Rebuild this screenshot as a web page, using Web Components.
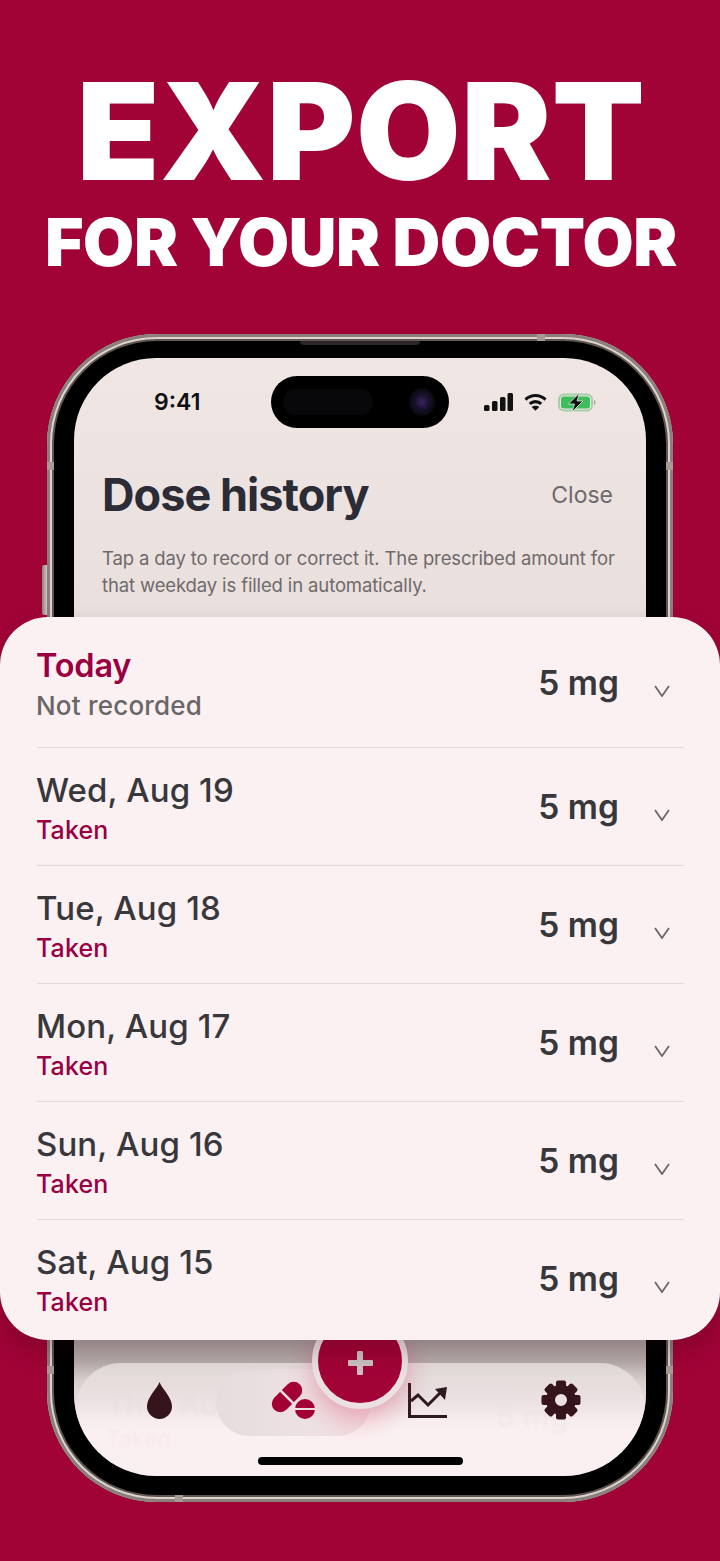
<!DOCTYPE html>
<html>
<head>
<meta charset="utf-8">
<style>
  html, body { margin: 0; padding: 0; background: #a10337; }
  body { font-family: Inter, "Liberation Sans", sans-serif; }
</style>
</head>
<body>
<promo-page>
  <span slot="big">EXPORT</span>
  <span slot="small">FOR YOUR DOCTOR</span>
  <phone-frame>
    <status-bar></status-bar>
    <sheet-header></sheet-header>
    <ghost-list></ghost-list>
    <tab-bar slot="over"></tab-bar>
  </phone-frame>
  <dose-sheet slot="sheet">
    <dose-row first date="Today" status="Not recorded" today></dose-row>
    <dose-row date="Wed, Aug 19" status="Taken"></dose-row>
    <dose-row date="Tue, Aug 18" status="Taken"></dose-row>
    <dose-row date="Mon, Aug 17" status="Taken"></dose-row>
    <dose-row date="Sun, Aug 16" status="Taken"></dose-row>
    <dose-row last date="Sat, Aug 15" status="Taken"></dose-row>
  </dose-sheet>
</promo-page>

<script>
class PromoPage extends HTMLElement {
  connectedCallback() {
    this.attachShadow({ mode: 'open' });
    this.shadowRoot.innerHTML = `
      <style>
        :host {
          display: block;
          position: relative;
          width: 720px;
          height: 1561px;
          overflow: hidden;
          background: #a10337;
          color: #fff;
          font-family: Inter, "Liberation Sans", sans-serif;
        }
        .head { display: flex; flex-direction: column; align-items: center; padding: 62px 0 0 2px; }
        .big { font-size: 135px; font-weight: 900; line-height: 138px; letter-spacing: 0.6px; }
        .small { font-size: 66px; font-weight: 900; line-height: 70px; margin-top: 7px; letter-spacing: -0.35px; }
        .phone { display: flex; justify-content: center; margin-top: 57px; }
        ::slotted(dose-sheet) { position: absolute; left: 0; top: 617px; }
      </style>
      <div class="head">
        <div class="big"><slot name="big"></slot></div>
        <div class="small"><slot name="small"></slot></div>
      </div>
      <div class="phone"><slot></slot></div>
      <slot name="sheet"></slot>
    `;
  }
}

class PhoneFrame extends HTMLElement {
  connectedCallback() {
    this.attachShadow({ mode: 'open' });
    this.shadowRoot.innerHTML = `
      <style>
        :host {
          display: block;
          position: relative;
          box-sizing: border-box;
          width: 626px;
          height: 1168px;
          padding: 24px 27px 26px;
          border-radius: 110px;
          background: #000;
          box-shadow: inset 0 0 0 3px #8b7f7b, inset 0 0 0 5px #dcd3cc, inset 0 0 0 7px #5f5552;
        }
        .screen {
          position: relative;
          display: flex;
          flex-direction: column;
          height: 100%;
          border-radius: 82px;
          overflow: hidden;
          background: linear-gradient(#f0e7e5 0, #e9dfdd 260px, #e6dcda 280px, #fbf0f1 1000px);
        }
        .island {
          position: absolute; left: 197px; top: 18px; width: 178px; height: 52px;
          border-radius: 26px; background: #000;
        }
        .island i { position: absolute; left: 12px; top: 13px; width: 90px; height: 26px; border-radius: 13px; background: #08080a; }
        .island b { position: absolute; left: 138px; top: 12px; width: 26px; height: 28px; border-radius: 50%; background: radial-gradient(#3a2460 0, #1a1230 35%, #09090d 70%); }
        .speaker { position: absolute; left: 253px; top: 7px; width: 120px; height: 4px; background: #2b2527; border-radius: 0 0 4px 4px; }
        .btn { position: absolute; left: -5px; top: 231px; width: 5px; height: 50px; background: linear-gradient(90deg, #8d827e, #cfc6bf); border-radius: 2px 0 0 2px; }
        .band { position: absolute; background: #a59a94; }
      </style>
      <span class="band" style="left:0;top:128px;width:7px;height:8px"></span>
      <span class="band" style="right:0;top:128px;width:7px;height:8px"></span>
      <span class="band" style="left:0;bottom:128px;width:7px;height:8px"></span>
      <span class="band" style="right:0;bottom:128px;width:7px;height:8px"></span>
      <span class="band" style="left:490px;top:0;width:8px;height:7px"></span>
      <span class="band" style="left:128px;bottom:0;width:8px;height:7px"></span>
      <span class="btn"></span>
      <span class="speaker"></span>
      <div class="screen">
        <slot></slot>
        <div class="island"><i></i><b></b></div>
        <slot name="over"></slot>
      </div>
    `;
  }
}

class StatusBar extends HTMLElement {
  connectedCallback() {
    this.attachShadow({ mode: 'open' });
    this.shadowRoot.innerHTML = `
      <style>
        :host {
          display: flex;
          align-items: center;
          justify-content: space-between;
          height: 88px;
          padding: 0 49px 0 80px;
          color: #101014;
          font: 600 23px Inter, "Liberation Sans", sans-serif;
        }
        .icons { display: flex; align-items: center; gap: 11px; }
        svg { display: block; }
      </style>
      <span>9:41</span>
      <span class="icons">
        <svg width="29" height="18" viewBox="0 0 29 18">
          <rect x="0" y="12" width="5.500" height="6" rx="1.500" fill="#111"/>
          <rect x="8" y="8" width="5.500" height="10" rx="1.500" fill="#111"/>
          <rect x="16" y="4" width="5.500" height="14" rx="1.500" fill="#111"/>
          <rect x="23.500" y="0" width="5.500" height="18" rx="1.500" fill="#111"/>
        </svg>
        <svg width="23" height="18" viewBox="0 0 24 18" fill="none" stroke="#111" stroke-width="3.200">
          <path d="M1.500 6.500C7.500 .8 16.500 .8 22.500 6.500"/>
          <path d="M6 11C9.500 7.800 14.500 7.800 18 11"/>
          <path d="M12 18L8 14.200C10.200 12.400 13.800 12.400 16 14.200Z" fill="#111" stroke="none"/>
        </svg>
        <svg width="39" height="19" viewBox="0 0 39 19">
          <rect x="1" y="1.500" width="33" height="16" rx="5" fill="none" stroke="#a3cfa8" stroke-width="2"/>
          <rect x="3" y="3.500" width="29" height="12" rx="3" fill="#3fbc5c"/>
          <path d="M36 7c2 .5 2 4.500 0 5z" fill="#a8a09e"/>
          <path d="M21.500 0L10.500 11h6L14 19l11-11h-6z" fill="#111" stroke="#dff0df" stroke-width=".8"/>
        </svg>
      </span>
    `;
  }
}

class SheetHeader extends HTMLElement {
  connectedCallback() {
    this.attachShadow({ mode: 'open' });
    this.shadowRoot.innerHTML = `
      <style>
        :host { display: block; padding: 18px 33px 0 28px; font-family: Inter, "Liberation Sans", sans-serif; }
        .top { display: flex; align-items: center; justify-content: space-between; }
        h1 { margin: 0; font-size: 45px; line-height: 62px; font-weight: 700; color: #2b2c36; letter-spacing: -0.95px; }
        span { font-size: 23px; color: #6e6a6b; }
        p { margin: 19px -14px 0 0; font-size: 18.500px; line-height: 27px; color: #6f6a6b; letter-spacing: -0.13px; }
      </style>
      <div class="top"><h1>Dose history</h1><span>Close</span></div>
      <p>Tap a day to record or correct it. The prescribed amount for that weekday is filled in automatically.</p>
    `;
  }
}

class GhostList extends HTMLElement {
  connectedCallback() {
    this.attachShadow({ mode: 'open' });
    this.shadowRoot.innerHTML = `
      <style>
        :host {
          display: flex;
          justify-content: space-between;
          margin-top: auto;
          padding: 0 78px 22px 32px;
          font-family: Inter, "Liberation Sans", sans-serif;
          filter: blur(1.5px);
        }
        .d { font-size: 30px; font-weight: 500; color: rgba(60,50,55,.08); line-height: 40px; }
        .t { font-size: 23px; color: rgba(163,0,53,.06); line-height: 30px; }
        .m { font-size: 30px; font-weight: 500; color: rgba(60,50,55,.05); margin-top: 14px; }
      </style>
      <div><div class="d">Thu, Aug 13</div><div class="t">Taken</div></div>
      <div class="m">5 mg</div>
    `;
  }
}

class TabBar extends HTMLElement {
  connectedCallback() {
    this.attachShadow({ mode: 'open' });
    this.shadowRoot.innerHTML = `
      <style>
        :host {
          position: absolute;
          left: 0;
          right: 0;
          bottom: 0;
          height: 136px;
          display: block;
          background: linear-gradient(#aea3a3 0, #b7acac 22px, #d8cdcd 40px, rgba(240,230,230,0) 80px);
        }
        .bar {
          position: absolute; left: 2px; right: 1px; top: 23px; height: 90px;
          border-radius: 45px 45px 0 0;
          background: linear-gradient(rgba(232,223,223,.95), rgba(251,240,241,.3) 70px);
        }
        .active {
          position: absolute; left: 142px; top: 29px; width: 155px; height: 67px;
          border-radius: 34px;
          background: linear-gradient(90deg, #e6dcdd, #eee1e3 60%, #f3dde1);
        }
        .fab {
          position: absolute; left: 238px; top: -27px; width: 96px; height: 96px;
          box-sizing: border-box;
          display: flex; align-items: center; justify-content: center;
          border-radius: 50%;
          border: 6px solid #ece0e2;
          background: #a10337;
          box-shadow: 0 10px 24px rgba(200,30,70,.3);
          padding-top: 4px;
        }
        .plus { position: relative; width: 25px; height: 24px; }
        .plus::before, .plus::after { content: ""; position: absolute; background: #cdc0c3; border-radius: 1px; }
        .plus::before { left: 0; right: 0; top: 9px; height: 6px; }
        .plus::after { top: 0; bottom: 0; left: 9.500px; width: 6px; }
        .ico { position: absolute; display: block; overflow: visible; }
        .home { position: absolute; left: 184px; bottom: 11px; width: 205px; height: 8px; border-radius: 4px; background: #000; }
      </style>
      <div class="bar"></div>
      <div class="active"></div>
      <svg class="ico" style="left:73px;top:42px" width="25" height="37" viewBox="0 0 25 37">
        <path d="M12.500 0C15 7 25 15 25 24.500A12.500 12.500 0 0 1 0 24.500C0 15 10 7 12.500 0Z" fill="#35141c"/>
      </svg>
      <svg class="ico" style="left:198px;top:42px" width="44" height="40" viewBox="0 0 44 40">
        <g transform="translate(15 15) rotate(-45)">
          <rect x="-18" y="-8.500" width="36" height="17" rx="8.500" fill="#a30035"/>
          <path d="M0-9V9" stroke="#efe3e5" stroke-width="2.500"/>
        </g>
        <circle cx="33" cy="27" r="10" fill="#a30035"/>
        <path d="M23 27H43" stroke="#efe3e5" stroke-width="2"/>
      </svg>
      <svg class="ico" style="left:334px;top:43px" width="40" height="35" viewBox="0 0 40 35" fill="none" stroke="#2e1a20">
        <path d="M1.500 0V33.500H39" stroke-width="3"/>
        <path d="M3 18L10 12L20 22L35 7" stroke-width="3"/>
        <path d="M39 4L27 6L37 17Z" fill="#2e1a20" stroke="none"/>
      </svg>
      <svg class="ico" style="left:467px;top:40px" width="40" height="40" viewBox="-20 -20 40 40" fill="#35141c">
        <circle r="10.500" fill="none" stroke="#35141c" stroke-width="9"/>
        <rect x="-5" y="-19.500" width="10" height="8" rx="2"/>
        <rect x="-5" y="-19.500" width="10" height="8" rx="2" transform="rotate(45)"/>
        <rect x="-5" y="-19.500" width="10" height="8" rx="2" transform="rotate(90)"/>
        <rect x="-5" y="-19.500" width="10" height="8" rx="2" transform="rotate(135)"/>
        <rect x="-5" y="-19.500" width="10" height="8" rx="2" transform="rotate(180)"/>
        <rect x="-5" y="-19.500" width="10" height="8" rx="2" transform="rotate(225)"/>
        <rect x="-5" y="-19.500" width="10" height="8" rx="2" transform="rotate(270)"/>
        <rect x="-5" y="-19.500" width="10" height="8" rx="2" transform="rotate(315)"/>
      </svg>
      <div class="fab"><span class="plus"></span></div>
      <div class="home"></div>
    `;
  }
}

class DoseSheet extends HTMLElement {
  connectedCallback() {
    this.attachShadow({ mode: 'open' });
    this.shadowRoot.innerHTML = `
      <style>
        :host {
          display: block;
          box-sizing: border-box;
          width: 720px;
          height: 723px;
          padding: 0 36px 0 37px;
          border-radius: 48px;
          background: #fbf1f2;
          box-shadow: 0 12px 24px rgba(40,0,15,.22);
        }
      </style>
      <slot></slot>
    `;
  }
}

class DoseRow extends HTMLElement {
  connectedCallback() {
    const today = this.hasAttribute('today');
    this.attachShadow({ mode: 'open' });
    this.shadowRoot.innerHTML = `
      <style>
        :host {
          display: flex;
          box-sizing: border-box;
          height: 118px;
          padding-top: 21px;
          justify-content: space-between;
          border-bottom: 1px solid #e3d9da;
          font-family: Inter, "Liberation Sans", sans-serif;
        }
        :host([first]) { height: 131px; padding-top: 28px; }
        :host([last]) { border-bottom: 0; }
        .txt { margin-left: -1px; }
        .date { font-size: ${today ? 32.5 : 33}px; line-height: 42px; font-weight: ${today ? 600 : 500}; color: ${today ? '#990042' : '#38383c'}; letter-spacing: ${today ? -0.2 : 0.1}px; }
        .status { font-size: ${today ? 26 : 25}px; line-height: ${today ? 37 : 38}px; color: ${today ? '#6a6667' : '#990042'}; font-weight: 500; letter-spacing: ${today ? 0.2 : 0.1}px; }
        .right { display: flex; align-items: flex-start; }
        .mg { font-size: 33.500px; line-height: 42px; font-weight: 600; color: #38383c; margin-top: 17px; }
        svg { display: block; margin: 40px 14px 0 35px; }
      </style>
      <div class="txt">
        <div class="date">${this.getAttribute('date')}</div>
        <div class="status">${this.getAttribute('status')}</div>
      </div>
      <div class="right">
        <span class="mg">5 mg</span>
        <svg width="16" height="12" viewBox="0 0 16 12" fill="none" stroke="#6b6768" stroke-width="1.800"><path d="M1 1L8 11L15 1"/></svg>
      </div>
    `;
  }
}

customElements.define('promo-page', PromoPage);
customElements.define('phone-frame', PhoneFrame);
customElements.define('status-bar', StatusBar);
customElements.define('sheet-header', SheetHeader);
customElements.define('ghost-list', GhostList);
customElements.define('tab-bar', TabBar);
customElements.define('dose-sheet', DoseSheet);
customElements.define('dose-row', DoseRow);
</script>
</body>
</html>
